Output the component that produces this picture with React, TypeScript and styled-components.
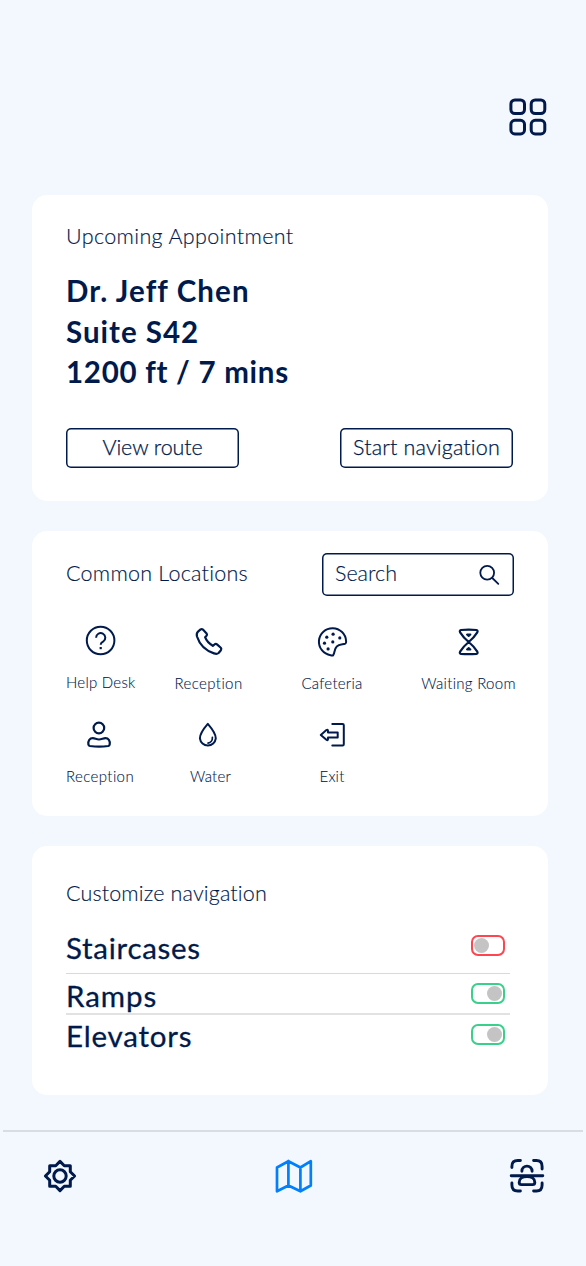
import React from 'react';
import styled, { createGlobalStyle } from 'styled-components';

const NAVY = '#001a4b';
const SKY = '#f3f7fe';

const GlobalStyle = createGlobalStyle`
  * { box-sizing: border-box; }
  body { margin: 0; background: ${SKY}; }
  button, input { font: inherit; color: inherit; }
`;

const Screen = styled.div`
  width: 586px;
  height: 1266px;
  background: ${SKY};
  color: ${NAVY};
  font-family: Lato, "Liberation Sans", sans-serif;
  white-space: nowrap;
  overflow: hidden;
  display: flex;
  flex-direction: column;
`;

const Header = styled.header`
  height: 195px;
  flex: none;
  padding: 97px 38px 0 0;
  display: flex;
  justify-content: flex-end;
  align-items: flex-start;
`;

const Cards = styled.main`
  width: 516px;
  margin-left: 31.5px;
  display: flex;
  flex-direction: column;
  gap: 30px;
`;

const Card = styled.section<{ $height: number }>`
  height: ${p => p.$height}px;
  background: #fff;
  border-radius: 15px;
  padding: 0 34.5px;
`;

const Title = styled.h2<{ $tracking: number }>`
  margin: 0;
  font-size: 21.5px;
  line-height: 28px;
  font-weight: 300;
  letter-spacing: ${p => p.$tracking}px;
  -webkit-text-stroke: 0.15px ${NAVY};
`;

const AppointmentTitle = styled(Title)`
  padding-top: 27px;
`;

const Details = styled.div`
  margin-top: 21px;
`;

const DetailLine = styled.p<{ $tracking: number }>`
  margin: 0;
  font-size: 29.5px;
  line-height: 40.5px;
  font-weight: 700;
  letter-spacing: ${p => p.$tracking}px;
`;

const Actions = styled.div`
  margin-top: 35px;
  width: 447px;
  display: flex;
  justify-content: space-between;
`;

const ActionButton = styled.button<{ $tracking: number }>`
  width: 173px;
  height: 40px;
  padding: 0 0 2px;
  border: 0;
  border-radius: 5px;
  background: #fff;
  box-shadow: inset 0 0 0 1.5px ${NAVY};
  font-size: 21.5px;
  line-height: 38px;
  font-weight: 300;
  letter-spacing: ${p => p.$tracking}px;
  -webkit-text-stroke: 0.25px ${NAVY};
`;

const LocationsHead = styled.div`
  padding-top: 22px;
  width: 448px;
  display: flex;
  justify-content: space-between;
`;

const LocationsTitle = styled(Title)`
  padding-top: 6px;
`;

const SearchBox = styled.label`
  width: 192px;
  height: 43px;
  padding: 0 13px;
  border-radius: 5px;
  box-shadow: inset 0 0 0 1.5px ${NAVY};
  display: flex;
  justify-content: space-between;
  align-items: center;
  font-size: 21.5px;
  font-weight: 300;
`;

const SearchText = styled.span`
  padding-bottom: 3px;
  -webkit-text-stroke: 0.15px ${NAVY};
`;

const LocationGrid = styled.div`
  margin: 29px 0 0 -20px;
  display: grid;
  grid-template-columns: 108px 109px 137px 136px;
  grid-auto-rows: 93px;
`;

const Location = styled.div`
  display: flex;
  flex-direction: column;
  align-items: center;
`;

const LocationLabel = styled.span<{ $tracking: number; $lift?: number; $indent?: number }>`
  margin-top: ${p => 16 - (p.$lift ?? 0)}px;
  padding-left: ${p => p.$indent ?? 0}px;
  font-size: 15px;
  line-height: 20px;
  font-weight: 300;
  letter-spacing: ${p => p.$tracking}px;
  -webkit-text-stroke: 0.1px ${NAVY};
`;

const CustomizeTitle = styled(Title)`
  padding-top: 33px;
`;

const Options = styled.div`
  width: 444px;
  margin-top: 21px;
`;

const Option = styled.div<{ $height: number; $line: number }>`
  height: ${p => p.$height}px;
  padding-right: 5px;
  border-bottom: ${p => p.$line}px solid ${p => (p.$line > 1 ? '#e2e2e2' : '#d9d9d9')};
  display: flex;
  justify-content: space-between;
  align-items: flex-start;
`;

const OptionName = styled.span<{ $tracking: number; $lineHeight: number }>`
  font-size: 29.5px;
  line-height: ${p => p.$lineHeight}px;
  font-weight: 400;
  letter-spacing: ${p => p.$tracking}px;
  -webkit-text-stroke: 0.3px ${NAVY};
`;

const Switch = styled.button<{ $on: boolean; $top: number }>`
  width: 34px;
  height: 21px;
  margin-top: ${p => p.$top}px;
  padding: 0 1px;
  border: 2px solid ${p => (p.$on ? '#38d08a' : '#ff4550')};
  border-radius: 7px;
  background: #fff;
  display: flex;
  align-items: center;
  justify-content: ${p => (p.$on ? 'flex-end' : 'flex-start')};
`;

const Knob = styled.span`
  width: 15px;
  height: 15px;
  border-radius: 50%;
  background: #c4c4c4;
`;

const TabBar = styled.nav`
  height: 136px;
  margin: 35px 3px 0;
  padding: 26px 38.5px 0 39px;
  border-top: 2px solid #d9dde2;
  display: flex;
  justify-content: space-between;
`;

type IconProps = { size?: number; stroke?: string; width?: number; children: React.ReactNode };
const IconSvg = styled.svg`
  flex: none;
`;
const Icon = ({ size = 32, stroke = NAVY, width = 2, children }: IconProps) => (
  <IconSvg width={size} height={size} viewBox={`0 0 ${size} ${size}`} fill="none" stroke={stroke}
    strokeWidth={width} strokeLinecap="round" strokeLinejoin="round">
    {children}
  </IconSvg>
);

const locations = [
  {
    name: 'Help Desk', tracking: 0.25, lift: 1.5, indent: 1.5,
    icon: <g transform="translate(0.8 0)">
      <circle cx="15.8" cy="15.5" r="13.8" />
      <path d="M11.3 12.7a4.6 4.6 0 1 1 7.2 3.8c-1.6 1-2.6 1.5-2.6 3.2" strokeLinecap="butt" />
      <path d="M15.9 22v2.2" strokeLinecap="butt" strokeWidth="2.2" />
    </g>,
  },
  {
    name: 'Reception', tracking: 0.4,
    icon: <path d="M5 6.6L7.6 4.4Q8.8 3.6 9.9 4.6L13.6 8.4Q14.5 9.6 13.5 10.8L12.1 12.2Q14 17.4 19.8 20.8L21.6 19.4Q22.8 18.4 24 19.4L27.8 22.8Q28.8 23.9 27.9 25.2L25.6 28Q24 29.4 21 28.4Q8 24 4 11.5Q3.2 8.2 5 6.6Z" strokeWidth="2.2" />,
  },
  {
    name: 'Cafeteria', tracking: 0.25, indent: 1,
    icon: <g transform="translate(0.1 0.2)">
      <path d="M17 30.1C19 27.5 18 24 20.5 21.5C23 18.4 27 19.5 29.2 18.4Q30.3 17.8 30 16A13.6 13.6 0 1 0 14.5 30Q16.2 30.6 17 30.1Z" />
      <g fill={NAVY} stroke="none">
        <circle cx="17" cy="9" r="1.6" /><circle cx="10.7" cy="12" r="1.6" />
        <circle cx="23.7" cy="12.7" r="1.6" /><circle cx="8.4" cy="18" r="1.6" />
        <circle cx="16.7" cy="16.7" r="1.6" /><circle cx="12" cy="23.7" r="1.6" />
      </g>
    </g>,
  },
  {
    name: 'Waiting Room', tracking: 0.3, indent: 1,
    icon: <g transform="translate(0.7 0)">
      <path d="M8.3 5Q16 4.4 23.7 5Q25.5 5.4 24.6 7.4C22 11.6 19 14.5 16 17C13 19.5 10 22.4 7.4 26.6Q6.5 28.5 8.3 28.8Q16 29.3 23.7 28.8Q25.5 28.5 24.6 26.6C22 22.4 19 19.5 16 17C13 14.5 10 11.6 7.4 7.4Q6.5 5.4 8.3 5Z" strokeWidth="2.2" />
      <path d="M14.3 9.6H17.7L16 11ZM14.3 24.4H17.7L16 23Z" fill={NAVY} />
    </g>,
  },
  {
    name: 'Reception', tracking: 0.4,
    icon: <g transform="translate(0.4 1)" strokeWidth="2.2">
      <circle cx="14.5" cy="9" r="5.3" />
      <path d="M4 25.5C3.4 21.5 5.4 19.2 8.4 19.2C10.6 19.2 12 20.5 14.6 20.5C17.2 20.5 18.8 19.2 21 19.2C24 19.2 25.9 21.5 25.3 25.5Q25.2 26.7 23.8 27C18 27.8 11.5 27.8 5.6 27Q4.2 26.7 4 25.5Z" />
    </g>,
  },
  {
    name: 'Water', tracking: 0.2, indent: 4,
    icon: <g transform="translate(0.2 1)">
      <path d="M14.6 4.9C11.2 8.8 6.7 14.4 6.7 19.4A8 8 0 0 0 22.6 19.4C22.6 14.4 18 8.8 14.6 4.9Z" />
      <path d="M19.2 18.3C19.4 21.4 17.4 23.8 14.8 24.1" strokeWidth="1.7" />
    </g>,
  },
  {
    name: 'Exit', tracking: 0.2, indent: 1,
    icon: <g transform="translate(0 1)">
      <path d="M16.3 5H26.6Q27.8 5 27.8 6.2V25.3Q27.8 26.6 26.6 26.6H16.3" />
      <path d="M4.8 16L10.4 11.1Q12 10 12 12V13.4H21.7V18.5H12V20Q12 22 10.4 20.8Z" />
    </g>,
  },
];

const options = [
  { name: 'Staircases', on: false, height: 46, line: 1, tracking: 0.72, top: 7, lineHeight: 39 },
  { name: 'Ramps', on: true, height: 41, line: 2, tracking: 0.95, top: 9, lineHeight: 44 },
  { name: 'Elevators', on: true, height: 41, line: 0, tracking: 0.8, top: 9, lineHeight: 42 },
];

export default function App() {
  return (
    <>
      <GlobalStyle />
      <Screen>
        <Header>
          <Icon size={40} width={3}>
            <rect x="2.9" y="3" width="13.6" height="13.6" rx="4" />
            <rect x="23.2" y="3" width="13.6" height="13.6" rx="4" />
            <rect x="2.9" y="23.3" width="13.6" height="13.6" rx="4" />
            <rect x="23.2" y="23.3" width="13.6" height="13.6" rx="4" />
          </Icon>
        </Header>

        <Cards>
          <Card $height={306}>
            <AppointmentTitle $tracking={0.36}>Upcoming Appointment</AppointmentTitle>
            <Details>
              <DetailLine $tracking={1.1}>Dr. Jeff Chen</DetailLine>
              <DetailLine $tracking={1}>Suite S42</DetailLine>
              <DetailLine $tracking={0.72}>1200 ft / 7 mins</DetailLine>
            </Details>
            <Actions>
              <ActionButton $tracking={-0.1}>View route</ActionButton>
              <ActionButton $tracking={0.15}>Start navigation</ActionButton>
            </Actions>
          </Card>

          <Card $height={285}>
            <LocationsHead>
              <LocationsTitle $tracking={0.25}>Common Locations</LocationsTitle>
              <SearchBox>
                <SearchText>Search</SearchText>
                <Icon size={24} width={1.8}>
                  <circle cx="10.2" cy="9.8" r="6.9" />
                  <path d="M15.3 15L21.3 20.8" />
                </Icon>
              </SearchBox>
            </LocationsHead>
            <LocationGrid>
              {locations.map((l, i) => (
                <Location key={i}>
                  <Icon>{l.icon}</Icon>
                  <LocationLabel $tracking={l.tracking} $lift={l.lift} $indent={l.indent}>{l.name}</LocationLabel>
                </Location>
              ))}
            </LocationGrid>
          </Card>

          <Card $height={249}>
            <CustomizeTitle $tracking={0.15}>Customize navigation</CustomizeTitle>
            <Options>
              {options.map(o => (
                <Option key={o.name} $height={o.height} $line={o.line}>
                  <OptionName $tracking={o.tracking} $lineHeight={o.lineHeight}>{o.name}</OptionName>
                  <Switch $on={o.on} $top={o.top} aria-pressed={o.on} aria-label={o.name}>
                    <Knob />
                  </Switch>
                </Option>
              ))}
            </Options>
          </Card>
        </Cards>

        <TabBar>
          <Icon size={36} width={3}>
            <path d="M18 3.4L22.3 7.7H28.3V13.7L32.6 18L28.3 22.3V28.3H22.3L18 32.6L13.7 28.3H7.7V22.3L3.4 18L7.7 13.7V7.7H13.7Z" />
            <circle cx="18" cy="18" r="6.2" />
          </Icon>
          <Icon size={40} width={2.7} stroke="#0080ff">
            <path d="M4 9.5L15.4 3.2L27.4 9.5L37.8 3.2V27.5L27.4 33.3L15.4 27.5L4 33.3ZM15.4 3.2V27.5M27.4 9.5V33.3" />
          </Icon>
          <Icon size={36} width={2.9}>
            <path d="M2.9 9.6V8.4Q2.9 2.5 8.8 2.5H11.4M24.6 2.5H27.4Q33.1 2.5 33.1 8.4V11M33.1 25V27Q33.1 33 27.4 33H24.6M11.4 33H8.8Q2.9 33 2.9 27V25" />
            <path d="M2.2 17.8H33.8M12.9 13.2A5.1 5.1 0 0 1 23.1 13.2" />
            <path d="M10.2 24.2C10.2 21 13 18.6 18 18.6C23 18.6 25.8 21 25.8 24.2Q25.8 26.6 23.6 26.6H12.4Q10.2 26.6 10.2 24.2Z" />
          </Icon>
        </TabBar>
      </Screen>
    </>
  );
}
